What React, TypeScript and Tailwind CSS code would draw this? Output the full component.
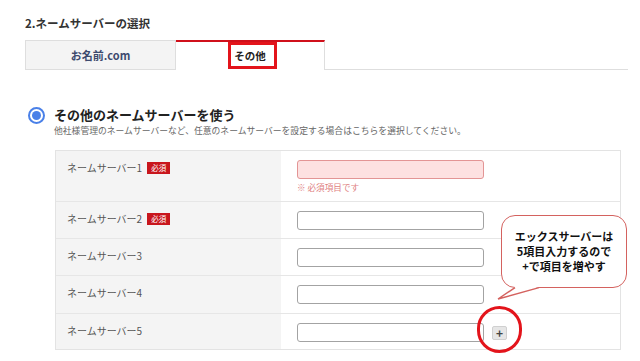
import React from 'react';

const rows = [
  { label: 'ネームサーバー1', required: true, error: true },
  { label: 'ネームサーバー2', required: true },
  { label: 'ネームサーバー3' },
  { label: 'ネームサーバー4' },
  { label: 'ネームサーバー5', plus: true },
];

const rowHeights = ['h-[50px]', 'h-[37px]', 'h-[37px]', 'h-[38px]', 'h-[36px]'];

export default function App() {
  return (
    <div
      className="relative w-[640px] h-[361px] overflow-hidden bg-white text-[#333]"
      style={{ fontFamily: '"Noto Sans CJK JP", "Noto Sans", sans-serif' }}
    >
      {/* Heading */}
      <h2 className="pl-[25px] pt-[15px] text-[11.5px] leading-[16px] font-bold text-[#333]">
        2.ネームサーバーの選択
      </h2>

      {/* Tabs */}
      <div className="mt-[9px] ml-[25px] flex h-[30px] w-[603px]">
        <div className="flex w-[151px] items-center justify-center border border-[#dedede] bg-[#f4f4f4] text-[11px] font-bold text-[#3d4a6e]">
          お名前.com
        </div>
        <div className="relative flex w-[149px] items-center justify-center border-t-2 border-r border-t-[#d0101b] border-r-[#dedede] text-[10.5px] font-bold text-[#222]">
          その他
          <div className="absolute left-[52px] top-0 h-[27px] w-[49px] border-[3px] border-[#e3141b]" />
        </div>
        <div className="flex-1 border-b border-[#dedede]" />
      </div>

      {/* Radio option */}
      <div className="mt-[36px] ml-[28px] flex items-center gap-[9px]">
        <div className="flex h-[17px] w-[17px] items-center justify-center rounded-full border-2 border-[#4a80e8]">
          <div className="h-[9px] w-[9px] rounded-full bg-[#4a80e8]" />
        </div>
        <div className="text-[13px] leading-[18px] font-bold text-[#222]">その他のネームサーバーを使う</div>
      </div>
      <p className="ml-[54px] mt-[1px] text-[8.8px] leading-[12px] text-[#666]">
        他社様管理のネームサーバーなど、任意のネームサーバーを設定する場合はこちらを選択してください。
      </p>

      {/* Table */}
      <div className="mt-[13px] ml-[55px] w-[566px] border border-[#e3e3e3]">
        {rows.map((r, i) => (
          <div key={r.label} className={`flex ${rowHeights[i]} ${i > 0 ? 'border-t border-[#e6e6e6]' : ''}`}>
            <div className="flex w-[225px] items-start gap-[5px] bg-[#f4f4f4] pl-[11px] pt-[10px] text-[10px] leading-[14px] text-[#555]">
              <span>{r.label}</span>
              {r.required && (
                <span className="mt-[1px] flex h-[12px] w-[23px] items-center justify-center bg-[#c8161d] text-[7.5px] leading-none text-white">
                  必須
                </span>
              )}
            </div>
            <div className="flex-1 pl-[16px] pt-[9px]">
              <div className="flex items-center gap-[8px]">
                <input
                  className={`h-[19px] w-[187px] rounded-[3px] border outline-none ${
                    r.error ? 'border-[#e39595] bg-[#fde1e1]' : 'border-[#a3a3a3] bg-white'
                  }`}
                />
                {r.plus && (
                  <button className="flex h-[14px] w-[15px] items-center justify-center rounded-[2px] border border-[#d0d0d0] bg-[#e6e6e6] text-[12px] font-bold leading-none text-[#444]">
                    +
                  </button>
                )}
              </div>
              {r.error && <p className="mt-[2px] text-[8.6px] leading-[12px] text-[#e07f7f]">※ 必須項目です</p>}
            </div>
          </div>
        ))}
      </div>

      {/* Annotation: speech bubble */}
      <div className="absolute left-[501px] top-[215px] flex h-[73px] w-[126px] flex-col items-center justify-center rounded-[14px] border-[1.5px] border-[#d4625f] bg-white text-[11px] font-bold leading-[15px] text-[#111]">
        <span>エックスサーバーは</span>
        <span>5項目入力するので</span>
        <span>+で項目を増やす</span>
      </div>
      <svg className="absolute left-[495px] top-[284px]" width="50" height="20" viewBox="0 0 50 20">
        <polygon points="20,3 3,15 44,3" fill="white" />
        <polyline points="20,3.6 3,15 44,3.6" fill="none" stroke="#d4625f" strokeWidth="1.5" />
      </svg>

      {/* Annotation: circle around plus */}
      <div className="absolute left-[477px] top-[306px] h-[47px] w-[45px] rounded-full border-[3px] border-[#e3141b]" />
    </div>
  );
}
